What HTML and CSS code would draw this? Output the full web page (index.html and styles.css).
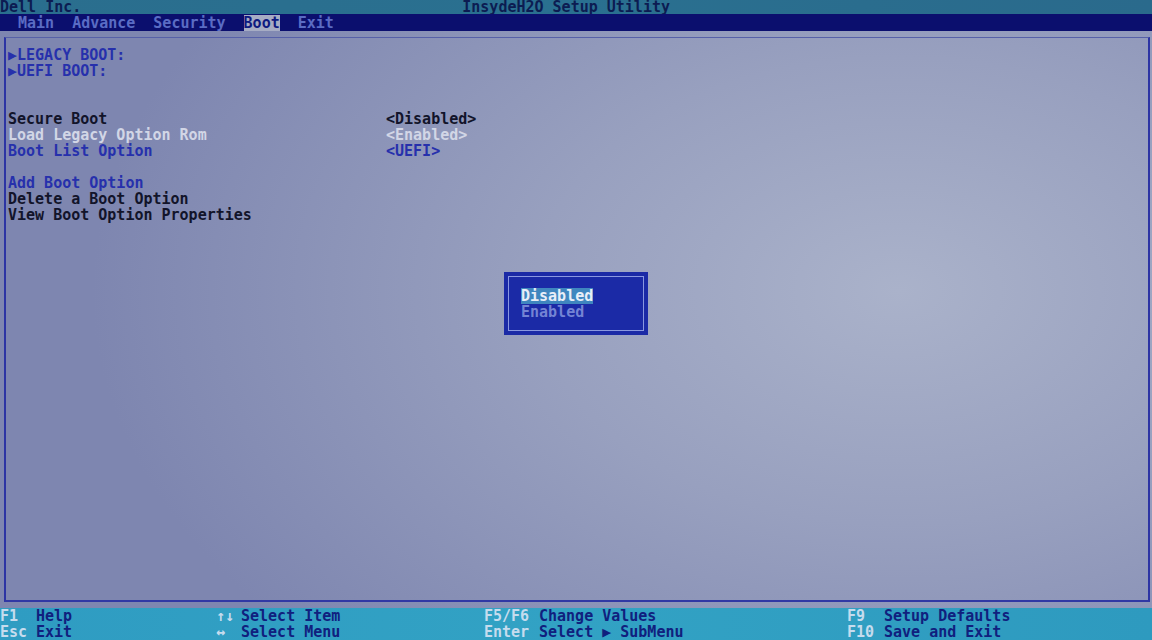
FILE: index.html
```html
<!DOCTYPE html>
<html>
<head>
<meta charset="utf-8">
<link rel="stylesheet" href="styles.css">
</head>
<body>
<div class="screen">
  <div class="topbar">
    <span class="vendor">Dell Inc.</span>
    <span class="title">InsydeH2O Setup Utility</span>
  </div>
  <div class="menubar">
    <span class="tab">Main</span>
    <span class="tab">Advance</span>
    <span class="tab">Security</span>
    <span class="tab active">Boot</span>
    <span class="tab">Exit</span>
  </div>
  <div class="main">
    <div class="frame">
      <div class="row blue">▶LEGACY BOOT:</div>
      <div class="row blue">▶UEFI BOOT:</div>
      <div class="row"></div>
      <div class="row"></div>
      <div class="row"><span class="label dark">Secure Boot</span><span class="value dark">&lt;Disabled&gt;</span></div>
      <div class="row"><span class="label light">Load Legacy Option Rom</span><span class="value light">&lt;Enabled&gt;</span></div>
      <div class="row"><span class="label blue">Boot List Option</span><span class="value blue">&lt;UEFI&gt;</span></div>
      <div class="row"></div>
      <div class="row blue">Add Boot Option</div>
      <div class="row dark">Delete a Boot Option</div>
      <div class="row dark">View Boot Option Properties</div>
    </div>
    <div class="popup">
      <div class="popup-inner">
        <div class="opt"><span class="selected">Disabled</span></div>
        <div class="opt">Enabled</div>
      </div>
    </div>
  </div>
  <div class="footer">
    <div class="fcol c1"><div><span class="key">F1</span><span class="desc">Help</span></div><div><span class="key">Esc</span><span class="desc">Exit</span></div></div>
    <div class="fcol c2"><div><span class="key arrows">↑↓</span><span class="desc">Select Item</span></div><div><span class="key arrows">↔</span><span class="desc">Select Menu</span></div></div>
    <div class="fcol c3"><div><span class="key">F5/F6</span><span class="desc">Change Values</span></div><div><span class="key">Enter</span><span class="desc">Select ▶ SubMenu</span></div></div>
    <div class="fcol c4"><div><span class="key">F9</span><span class="desc">Setup Defaults</span></div><div><span class="key">F10</span><span class="desc">Save and Exit</span></div></div>
  </div>
</div>
</body>
</html>
```

FILE: styles.css
```css
html, body {
  margin: 0;
  padding: 0;
  background: #8088b0;
}

.screen {
  width: 1152px;
  height: 640px;
  display: flex;
  flex-direction: column;
  font-family: "DejaVu Sans Mono", "Liberation Mono", monospace;
  font-weight: bold;
  font-size: 15px;
  white-space: nowrap;
  overflow: hidden;
}

.topbar {
  height: 14px;
  line-height: 14px;
  background: linear-gradient(90deg, #2a6e8e 0%, #2a7090 50%, #2a6a8c 100%);
  color: #0c1c52;
  display: flex;
  overflow: hidden;
}

.title {
  margin-left: 381px;
}

.menubar {
  height: 17px;
  line-height: 17px;
  padding-top: 1px;
  box-sizing: border-box;
  background: #0b0f6e;
  display: flex;
  padding-left: 18px;
  gap: 18px;
}

.tab {
  color: #5a6cc4;
  height: 16px;
}

.tab.active {
  background: #a6acc4;
  color: #0e1a80;
}

.main {
  flex: 1;
  display: flex;
  padding: 6px 2px 6px 4px;
  background: radial-gradient(ellipse 70% 90% at 78% 45%, #aab2ca 0%, #98a0bf 45%, #7e86b0 100%);
  position: relative;
}

.frame {
  flex: 1;
  border-top: 1px solid #5660a8;
  border-left: 2px solid #2c34a4;
  border-right: 2px solid #2c34a4;
  border-bottom: 2px solid #3038a4;
  padding: 9px 0 0 2px;
  display: flex;
  flex-direction: column;
}

.row {
  height: 16px;
  line-height: 16px;
  display: flex;
}

.label {
  width: 378px;
}

.blue { color: #2630ac; }
.dark { color: #12142a; }
.light { color: #d2d6e6; }

.popup {
  position: absolute;
  left: 504px;
  top: 241px;
  width: 144px;
  height: 63px;
  background: #1b2aa6;
  padding: 4px;
  box-sizing: border-box;
}

.popup-inner {
  height: 100%;
  border: 1px solid #8a98e0;
  box-sizing: border-box;
  padding: 11px 0 0 12px;
  display: flex;
  flex-direction: column;
}

.opt {
  height: 16px;
  line-height: 16px;
  color: #7484d4;
  display: flex;
}

.selected {
  background: #3f86bf;
  color: #e8eef8;
}

.footer {
  height: 32px;
  background: linear-gradient(90deg, #2f9cc2 0%, #32a2c4 50%, #2e9abf 100%);
  display: flex;
}

.fcol {
  display: flex;
  flex-direction: column;
}

.fcol > div {
  height: 16px;
  line-height: 16px;
  display: flex;
  align-items: center;
}

.c1 { width: 216px; }
.c2 { width: 268px; }
.c3 { width: 363px; }

.c1 .key { width: 36px; }
.c2 .key { width: 25px; }
.c3 .key { width: 55px; }
.c4 .key { width: 37px; }

.key { color: #c6dcee; }
.arrows { font-size: 15px; line-height: 16px; }
.desc { color: #10207e; }
```
